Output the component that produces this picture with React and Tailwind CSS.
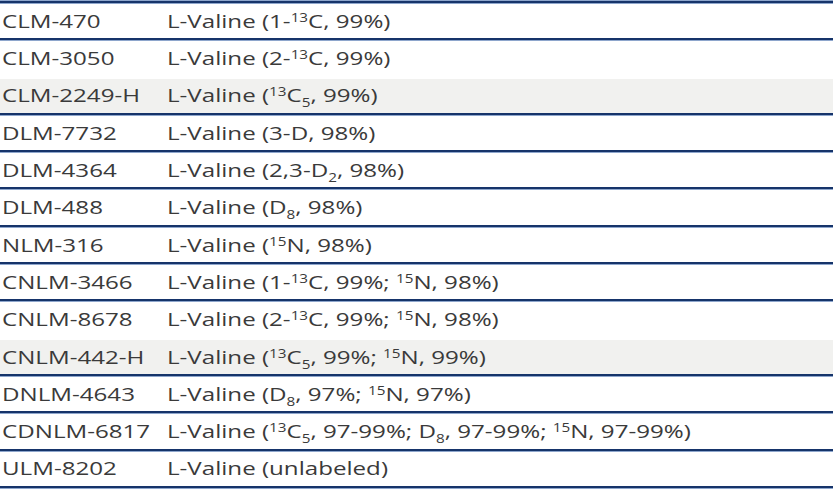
const rows = [
  { code: "CLM-470", desc: <>L-Valine (1-<Sup>13</Sup>C, 99%)</>, line: true },
  { code: "CLM-3050", desc: <>L-Valine (2-<Sup>13</Sup>C, 99%)</>, line: false },
  { code: "CLM-2249-H", desc: <>L-Valine (<Sup>13</Sup>C<Sub>5</Sub>, 99%)</>, line: true, shade: true },
  { code: "DLM-7732", desc: <>L-Valine (3-D, 98%)</>, line: true },
  { code: "DLM-4364", desc: <>L-Valine (2,3-D<Sub>2</Sub>, 98%)</>, line: true },
  { code: "DLM-488", desc: <>L-Valine (D<Sub>8</Sub>, 98%)</>, line: true },
  { code: "NLM-316", desc: <>L-Valine (<Sup>15</Sup>N, 98%)</>, line: true },
  { code: "CNLM-3466", desc: <>L-Valine (1-<Sup>13</Sup>C, 99%; <Sup>15</Sup>N, 98%)</>, line: true },
  { code: "CNLM-8678", desc: <>L-Valine (2-<Sup>13</Sup>C, 99%; <Sup>15</Sup>N, 98%)</>, line: false },
  { code: "CNLM-442-H", desc: <>L-Valine (<Sup>13</Sup>C<Sub>5</Sub>, 99%; <Sup>15</Sup>N, 99%)</>, line: true, shade: true },
  { code: "DNLM-4643", desc: <>L-Valine (D<Sub>8</Sub>, 97%; <Sup>15</Sup>N, 97%)</>, line: true },
  { code: "CDNLM-6817", desc: <>L-Valine (<Sup>13</Sup>C<Sub>5</Sub>, 97-99%; D<Sub>8</Sub>, 97-99%; <Sup>15</Sup>N, 97-99%)</>, line: true },
  { code: "ULM-8202", desc: <>L-Valine (unlabeled)</>, line: true },
];

function Sup({ children }) {
  return <span className="text-[12px] leading-none align-[6px]">{children}</span>;
}

function Sub({ children }) {
  return <span className="text-[12px] leading-none align-[-5px]">{children}</span>;
}

function Rule() {
  return (
    <div className="flex flex-col">
      <div className="h-[2px] bg-[#16346a]" />
      <div className="h-px bg-[#8ea6cc]" />
    </div>
  );
}

export default function App() {
  return (
    <div className="w-[836px] h-[489px] bg-white overflow-hidden pr-[3px] text-[19px] text-[#3a3a3a] font-['Open_Sans',sans-serif]">
      <div className="h-px bg-[#8ea6cc]" />
      <Rule />
      {rows.map((r) => (
        <div key={r.code}>
          <div className={r.shade ? "flex items-center h-[34.3px] bg-[#f1f1ef]" : "flex items-center h-[34.3px] bg-white"}>
            <div className="w-[167px] pl-[2px] shrink-0">
              <span className="inline-block origin-left scale-x-[1.27] whitespace-nowrap">{r.code}</span>
            </div>
            <div>
              <span className="inline-block origin-left scale-x-[1.27] whitespace-nowrap">{r.desc}</span>
            </div>
          </div>
          {r.line ? <Rule /> : <div className="h-[3px]" />}
        </div>
      ))}
    </div>
  );
}
